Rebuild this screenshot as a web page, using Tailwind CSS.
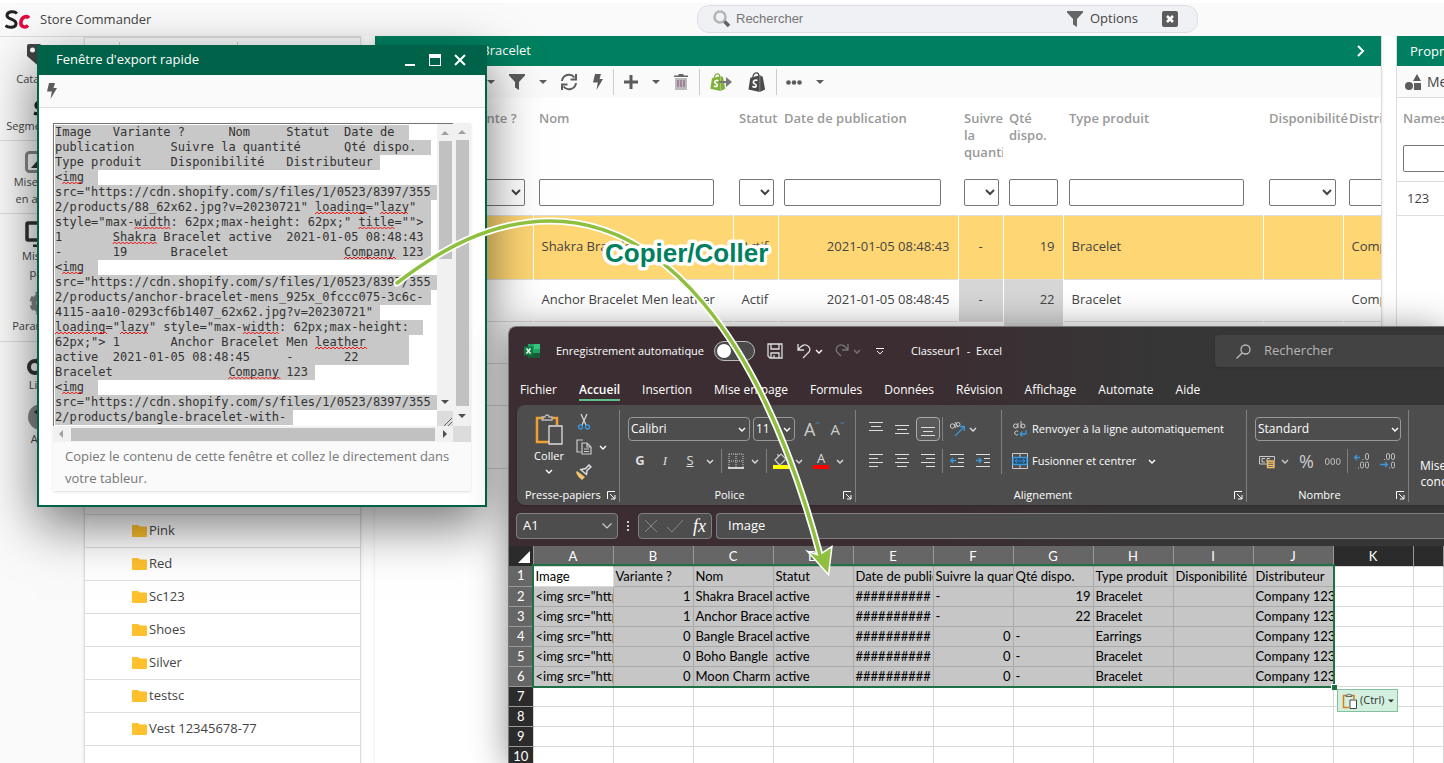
<!DOCTYPE html>
<html lang="fr">
<head>
    <meta charset="UTF-8">
    <meta name="viewport" content="width=device-width, initial-scale=1.0">
    <title>Store Commander</title>
    <script src="https://cdn.jsdelivr.net/npm/@tailwindcss/browser@4"></script>
</head>
<body class="bg-white font-['Open_Sans',sans-serif] text-[13px] text-[#444]">

    <!-- Shared icons -->
    <svg class="hidden">
        <symbol id="caret" viewBox="0 0 8 4"><path d="M0 0h8L4 4z" fill="currentColor"/></symbol>
        <symbol id="chevron" viewBox="0 0 8 5"><path d="M1 1l3 3 3-3" fill="none" stroke="currentColor" stroke-width="1.4"/></symbol>
        <symbol id="funnel" viewBox="0 0 16 16"><path d="M0 0h16v1.5L10 8v8l-4-2.5V8L0 1.500z" fill="currentColor"/></symbol>
        <symbol id="bolt" viewBox="0 0 10 16"><path d="M2 0h6L6.500 5H10L3.500 16 4.800 8.500H0z" fill="currentColor"/></symbol>
        <symbol id="bag" viewBox="0 0 18 21"><path d="M2 6l10-2.500 3 1.500 2.500 13.500L12 21 0 18.500z" fill="currentColor"/><path d="M4.500 6C5 2.500 7 1 8.500 1s2.500 1.500 2.500 3.500" fill="none" stroke="currentColor" stroke-width="1.300"/><path d="M12 4v17" stroke="#fff" stroke-opacity=".35"/><path d="M9.500 9C7 8 5 9 5.200 10.800c.2 1.700 3 1.700 3 3.600 0 1.700-2.200 2-4 .6" fill="none" stroke="#fff" stroke-width="1.800"/></symbol>
        <symbol id="folder" viewBox="0 0 15 12"><path d="M1 0h5l2 1.500h6a1 1 0 011 1V11a1 1 0 01-1 1H1a1 1 0 01-1-1V1a1 1 0 011-1z" fill="#fec12d"/></symbol>
        <symbol id="launcher" viewBox="0 0 9 9"><path d="M.5 8V.5H8M3 3l5 5M8 4v4H4" fill="none" stroke="currentColor"/></symbol>
    </svg>

    <div class="relative flex h-screen flex-col overflow-hidden">

        <!-- Top bar -->
        <header class="flex h-9 shrink-0 items-center border-t-3 border-white bg-[#fafafa]">
            <svg class="ml-[5px] h-5 w-[26px]" viewBox="0 0 26 20" fill="none">
                <path d="M12 3.500C9.500 1 2.500 1 2 5.200c-.4 4.600 9 3.300 9 8.300 0 5-8 4.500-10.500 2" stroke="#222" stroke-width="3"/>
                <path d="M24 8c-2-2.500-7-1.500-8 3.500-1 6 4.500 6.500 7 4" stroke="#e4073c" stroke-width="3.500"/>
            </svg>
            <span class="ml-[9px]">Store Commander</span>
            <label class="absolute left-[697px] top-[5px] flex h-7 w-[501px] items-center rounded-xl border border-[#dcdee1] bg-[#f0f1f4] pl-[15px]">
                <svg class="size-[18px]" viewBox="0 0 18 18" fill="none"><circle cx="7" cy="7" r="5.500" stroke="#b4b4b4" stroke-width="2.500"/><path d="M11.500 11.500L16 16" stroke="#59636e" stroke-width="3.500"/></svg>
                <input type="text" placeholder="Rechercher" class="ml-[5px] w-[331px] bg-transparent font-['Liberation_Sans',sans-serif] text-[13px] placeholder:text-[#757575]">
                <button class="flex items-center"><svg class="mr-[7px] size-4 text-[#666]"><use href="#funnel"/></svg>Options</button>
                <button aria-label="Fermer" class="ml-6"><svg class="size-4" viewBox="0 0 16 16"><rect width="16" height="16" rx="2" fill="#5c5c5c"/><path d="M5 5l6 6M11 5l-6 6" stroke="#fff" stroke-width="2.500"/></svg></button>
            </label>
        </header>

        <div class="flex min-h-0 grow">

            <!-- Sidebar -->
            <nav class="w-[84px] shrink-0 overflow-hidden whitespace-nowrap border-t border-[#ddd] bg-[#fafafa] text-center text-[11px] leading-[17px]">
                <a href="#" class="block h-[63px] pt-[7px]"><svg class="mx-auto h-[26px] w-[30px]" viewBox="0 0 30 26"><path d="M0 2a2 2 0 012-2h11l15 14-12 12L0 12z" fill="#444"/><circle cx="5.500" cy="6" r="2.500" fill="#fff"/></svg>Catalogue</a>
                <a href="#" class="block h-10"><svg class="mx-auto h-[17px] w-5" viewBox="0 0 20 17"><path d="M10 3C4 0 2 7 6 8s3 8-4 5" fill="none" stroke="#222" stroke-width="3"/></svg>Segmentation</a>
                <a href="#" class="block h-[73px] border-t border-[#ddd] pt-[10px]"><svg class="mx-auto h-[22px] w-[34px]" viewBox="0 0 34 22"><rect x="1.500" y="1.500" width="31" height="19" rx="3" fill="none" stroke="#888" stroke-width="3"/><path d="M6 17l7-8 7 8z" fill="#333"/></svg>Mise à jour<br>en attente</a>
                <a href="#" class="block h-[76px] border-t border-[#ddd] pt-[7px]"><svg class="mx-auto h-[26px] w-[34px]" viewBox="0 0 34 26"><rect x="2" y="2" width="30" height="17" rx="1" fill="none" stroke="#333" stroke-width="3.500"/><path d="M8 25h18" stroke="#333" stroke-width="3"/></svg>Mise en<br>page</a>
                <a href="#" class="block h-[52px] pt-[2px]"><svg class="mx-auto mb-[2px] h-6 w-7" viewBox="0 0 28 24"><circle cx="14" cy="12" r="8" fill="none" stroke="#888" stroke-width="5"/><circle cx="14" cy="12" r="11" fill="none" stroke="#888" stroke-width="3" stroke-dasharray="5 4"/></svg>Paramètres</a>
                <a href="#" class="block h-[59px] border-t border-[#ddd] pt-[12px]"><svg class="mx-auto h-[22px] w-[30px]" viewBox="0 0 30 22" fill="none" stroke="#333" stroke-width="4"><circle cx="8" cy="13" r="6"/><circle cx="16" cy="7" r="5"/></svg>Liens</a>
                <a href="#" class="block pt-[4px]"><svg class="mx-auto h-[26px] w-[30px]" viewBox="0 0 30 26"><circle cx="14" cy="13" r="13" fill="#888"/><path d="M8 9q6-6 12 0" stroke="#333" stroke-width="3" fill="none"/></svg>Aide</a>
            </nav>

            <!-- Category tree -->
            <section class="flex w-[277px] shrink-0 flex-col border-x border-t-2 border-[#ddd] bg-white shadow">
                <div class="flex h-12 shrink-0 items-start border-b border-[#ddd] bg-[#fafafa] pt-1">
                    <span class="ml-[34px] h-6 border-l border-[#ccc]"></span>
                    <span class="ml-[117px] h-6 border-l border-[#ccc]"></span>
                </div>
                <ul id="tree"></ul>
            </section>

            <!-- Product grid -->
            <section class="ml-[14px] flex min-w-0 grow flex-col border-r border-[#ddd] bg-white shadow">
                <div class="flex h-[30px] shrink-0 items-center bg-[#008060] pl-[13px] pr-4 text-white">
                    <svg class="h-3 w-3" viewBox="0 0 12 12"><rect x="1" y="1" width="10" height="10" rx="2" fill="none" stroke="#fff" stroke-width="1.500"/></svg>
                    <h2 class="ml-[3px] w-32 text-right">Bracelet</h2>
                    <svg class="ml-auto h-3 w-[9px]" viewBox="0 0 9 12"><path d="M2 1l5 5-5 5" fill="none" stroke="#fff" stroke-width="2"/></svg>
                </div>
                <div class="flex h-8 shrink-0 items-center bg-[#fafafa] pl-[112px] text-[#5c5c5c]">
                    <button aria-label="Plus"><svg class="h-1 w-2"><use href="#caret"/></svg></button>
                    <button aria-label="Filtrer" class="ml-[14px]"><svg class="size-4"><use href="#funnel"/></svg></button>
                    <button aria-label="Plus" class="ml-[14px]"><svg class="h-1 w-2"><use href="#caret"/></svg></button>
                    <button aria-label="Rafraîchir" class="ml-[13px]"><svg class="size-[18px]" viewBox="0 0 18 18" fill="none" stroke="currentColor" stroke-width="2"><path d="M2 8a7 7 0 0112.500-3.500M16 10A7 7 0 013.500 13.500M16 1v5.500h-5.500M2 17v-5.500h5.500"/></svg></button>
                    <button aria-label="Export rapide" class="ml-[14px]"><svg class="h-4 w-3"><use href="#bolt"/></svg></button>
                    <span class="ml-[9px] h-[26px] border-l border-[#ccc]"></span>
                    <button aria-label="Ajouter" class="ml-[10px]"><svg class="size-[14px]" viewBox="0 0 14 14" stroke="currentColor" stroke-width="3"><path d="M7 0v14M0 7h14"/></svg></button>
                    <button aria-label="Plus" class="ml-[14px]"><svg class="h-1 w-2"><use href="#caret"/></svg></button>
                    <button aria-label="Supprimer" class="ml-[14px]"><svg class="h-4 w-[14px]" viewBox="0 0 14 16"><path d="M0 1.500h4L5 0h4l1 1.500h4v1.500H0z" fill="#666"/><path d="M1 4h12v12H1z" fill="#bbb"/><path d="M4 6v7M7 6v7M10 6v7" stroke="#8a4a78"/></svg></button>
                    <span class="ml-[11px] h-[26px] border-l border-[#ccc]"></span>
                    <button aria-label="Voir sur la boutique" class="ml-[10px] flex items-center"><svg class="h-[18px] w-4 text-[#7fb13c]"><use href="#bag"/></svg><svg class="-ml-[7px] h-[10px] w-[13px]" viewBox="0 0 13 10"><path d="M0 4h7V0l6 5-6 5V6H0z" fill="#777"/></svg></button>
                    <button aria-label="Voir dans Shopify" class="ml-4"><svg class="h-5 w-[18px] text-[#4a4a4a]"><use href="#bag"/></svg></button>
                    <span class="ml-[10px] h-[26px] border-l border-[#ccc]"></span>
                    <button aria-label="Autres" class="ml-[9px]"><svg class="h-[5px] w-4" viewBox="0 0 16 5" fill="currentColor"><circle cx="2.500" cy="2.500" r="2.300"/><circle cx="8" cy="2.500" r="2.300"/><circle cx="13.500" cy="2.500" r="2.300"/></svg></button>
                    <button aria-label="Plus" class="ml-[14px]"><svg class="h-1 w-2"><use href="#caret"/></svg></button>
                </div>
                <div class="overflow-hidden">
                    <table class="w-[1168px] table-fixed border-collapse">
                        <colgroup><col class="w-[73px]"><col class="w-[85px]"><col class="w-[200px]"><col class="w-[45px]"><col class="w-[180px]"><col class="w-[45px]"><col class="w-[60px]"><col class="w-[200px]"><col class="w-[80px]"><col class="w-[200px]"></colgroup>
                        <thead id="gridHead"></thead>
                        <tbody id="gridBody"></tbody>
                    </table>
                </div>
            </section>

            <!-- Properties -->
            <section class="ml-[14px] w-12 shrink-0 overflow-hidden whitespace-nowrap border-l border-[#ddd] bg-white">
                <h2 class="h-[30px] bg-[#008060] pl-[13px] leading-[30px] text-white">Propriétés</h2>
                <div class="flex h-8 items-center border-b border-[#ddd] bg-[#fafafa] pl-2 text-sm">
                    <svg class="mr-[6px] h-4 w-4 shrink-0" viewBox="0 0 16 16" fill="#5c5c5c"><circle cx="4" cy="12" r="4"/><path d="M12 0l4 7H8zM9 9h7v7H9z"/></svg>Metafields
                </div>
                <label for="ns" class="block h-[47px] pl-[6px] pt-[11px] font-semibold text-[#999]">Namespace</label>
                <input id="ns" type="text" class="ml-[6px] h-[27px] w-32 rounded-[2px] border border-[#767676]">
                <div class="mt-[9px] border-y border-[#ddd] pl-[10px] leading-[33px]">123</div>
            </section>
        </div>

        <!-- Quick export window -->
        <section class="absolute left-[37px] top-[45px] w-[450px] border-2 border-t-0 border-[#006349] bg-white shadow-[0_18px_50px_rgba(0,0,0,0.55)]">
            <div class="flex h-[30px] items-center bg-[#006349] pl-[17px] pr-[19px] text-white">
                <h2>Fenêtre d'export rapide</h2>
                <button aria-label="Réduire" class="ml-auto mt-[10px] h-[2px] w-[10px] bg-white"></button>
                <button aria-label="Agrandir" class="ml-[14px] h-3 w-3 border border-t-4 border-white"></button>
                <button aria-label="Fermer" class="ml-[13px]"><svg class="size-3" viewBox="0 0 12 12" stroke="#fff" stroke-width="2"><path d="M1 1l10 10M11 1L1 11"/></svg></button>
            </div>
            <div class="flex h-[33px] items-center border-b border-[#ddd] bg-[#fafafa] pl-2 text-[#5c5c5c]">
                <button aria-label="Exporter"><svg class="h-4 w-[10px]"><use href="#bolt"/></svg></button>
            </div>
            <div class="mx-[14px] mb-[14px] mt-[15px] bg-[#fafafa] shadow">
                <div class="flex h-[319px]">
                    <div class="flex min-w-0 grow flex-col">
                        <div class="flex h-[303px] border-l border-t border-[#767676]">
                            <div class="relative min-w-0 grow bg-white">
                                <textarea id="export" aria-label="Données exportées" spellcheck="false" class="block h-full w-full resize-none overflow-hidden whitespace-pre bg-white pl-px pt-px font-['DejaVu_Sans_Mono',monospace] text-xs leading-[15px] text-[#333] outline-none [tab-size:8] selection:bg-[#c8c8c8] selection:text-[#333]"></textarea>
                                <svg id="squiggles" class="pointer-events-none absolute inset-0 h-full w-full" fill="none" stroke="#e11"></svg>
                            </div>
                            <div class="flex w-4 shrink-0 flex-col items-center bg-[#f1f1f1] pt-[7px]">
                                <svg class="h-1 w-2 rotate-180 text-[#a0a0a0]"><use href="#caret"/></svg>
                                <div class="mt-[6px] h-[118px] w-[13px] bg-[#c1c1c1]"></div>
                                <svg class="mt-auto h-1 w-2 text-[#505050]"><use href="#caret"/></svg>
                                <svg class="mt-[7px] h-[15px] w-full bg-[#dcdcdc]" viewBox="0 0 16 15"><path d="M7 15l8-8M11 15l4-4" stroke="#666"/></svg>
                            </div>
                        </div>
                        <div class="flex h-4 items-center bg-[#f1f1f1] px-[6px]">
                            <svg class="h-2 w-1" viewBox="0 0 4 8"><path d="M4 0v8L0 4z" fill="#a0a0a0"/></svg>
                            <div class="ml-2 h-[13px] grow bg-[#c1c1c1]"></div>
                            <svg class="ml-2 h-2 w-1" viewBox="0 0 4 8"><path d="M0 0v8l4-4z" fill="#505050"/></svg>
                        </div>
                    </div>
                    <div class="flex w-[18px] shrink-0 flex-col items-center bg-[#f1f1f1] pt-[7px]">
                        <svg class="h-1 w-2 rotate-180 text-[#a0a0a0]"><use href="#caret"/></svg>
                        <div class="mt-[6px] w-[13px] grow bg-[#c1c1c1]"></div>
                        <svg class="my-2 h-1 w-2 shrink-0 text-[#505050]"><use href="#caret"/></svg>
                        <div class="h-4 w-full shrink-0 bg-[#dcdcdc]"></div>
                    </div>
                </div>
                <p class="px-3 pb-[2px] pt-[3px] leading-[22px] text-[#777]">Copiez le contenu de cette fenêtre et collez le directement dans votre tableur.</p>
            </div>
        </section>

        <!-- Excel window -->
        <section class="absolute bottom-0 left-[508px] right-0 top-[326px] flex flex-col overflow-hidden rounded-tl-lg border-l border-t border-[#777] bg-linear-to-r from-[#3b2d31] from-45% to-[#363636] to-70% text-[11px] text-white shadow-[0_4px_36px_rgba(0,0,0,0.45)]">
            <div class="flex h-12 shrink-0 items-center pl-[15px]">
                <svg class="size-4" viewBox="0 0 16 16"><path d="M4 1h12v14H4z" fill="#21a366"/><path d="M10 1h6v5h-6z" fill="#33c481"/><path d="M4 10h12v5H4z" fill="#185c37"/><path d="M0 3.500h9v9H0z" fill="#107c41"/><path d="M2.500 5.500l4 5M6.500 5.500l-4 5" stroke="#fff" stroke-width="1.300"/></svg>
                <label for="autosave" class="ml-4">Enregistrement automatique</label>
                <input id="autosave" type="checkbox" class="ml-[10px] h-5 w-[41px] appearance-none rounded-full border border-[#bbb] bg-[#4a4a4a] before:m-[2px] before:block before:size-[14px] before:rounded-full before:bg-white">
                <button aria-label="Enregistrer" class="ml-3"><svg class="size-4" viewBox="0 0 16 16" fill="none" stroke="#ddd" stroke-width="1.300"><path d="M1 1h14v14H3l-2-2zM4 1v5h8V1M4 15v-5h8v5M7 15v-3"/></svg></button>
                <button aria-label="Annuler" class="ml-[14px] flex items-center"><svg class="h-4 w-[14px]" viewBox="0 0 14 16" fill="none" stroke="#ddd" stroke-width="1.300"><path d="M1 1v6h6M1 7C5 1 9 1 11.500 3.500s1.500 5-1 7L6 15"/></svg><svg class="ml-1 h-[5px] w-2"><use href="#chevron"/></svg></button>
                <button aria-label="Rétablir" class="ml-3 flex items-center text-[#777]"><svg class="h-4 w-[14px]" viewBox="0 0 14 16" fill="none" stroke="#777" stroke-width="1.300"><path d="M13 1v6H7M13 7C9 1 5 1 2.500 3.500s-1.500 5 1 7L6 13"/></svg><svg class="ml-1 h-[5px] w-2"><use href="#chevron"/></svg></button>
                <button aria-label="Personnaliser" class="ml-[15px]"><svg class="h-[7px] w-2" viewBox="0 0 8 7" fill="none" stroke="#fff"><path d="M0 .5h8M1 3l3 3 3-3"/></svg></button>
                <span class="ml-[27px] whitespace-pre">Classeur1  -  Excel</span>
                <label class="absolute left-[706px] right-0 top-2 flex h-8 items-center rounded-l bg-[#434343] pl-[21px] shadow">
                    <svg class="size-[15px]" viewBox="0 0 15 15" fill="none" stroke="#bbb" stroke-width="1.300"><circle cx="9.500" cy="5.500" r="4.500"/><path d="M6.300 8.700L.5 14.500"/></svg>
                    <input type="text" placeholder="Rechercher" class="ml-[13px] w-32 bg-transparent text-[13px] placeholder:text-[#b5b5b5]">
                </label>
            </div>

            <nav class="flex h-[30px] shrink-0 gap-[22px] pl-[11px] text-xs leading-[30px]">
                <a href="#">Fichier</a>
                <a href="#" class="h-[26px] border-b-2 border-[#5fc08a] font-semibold">Accueil</a>
                <a href="#">Insertion</a>
                <a href="#">Mise en page</a>
                <a href="#">Formules</a>
                <a href="#">Données</a>
                <a href="#">Révision</a>
                <a href="#">Affichage</a>
                <a href="#">Automate</a>
                <a href="#">Aide</a>
            </nav>

            <!-- Ribbon -->
            <div class="ml-2 flex h-[100px] shrink-0 overflow-hidden rounded-l-lg bg-[#4d4d4d] pb-[3px] pt-[5px] shadow">
                <div class="flex w-[103px] shrink-0 flex-col border-r border-[#808080]">
                    <div class="flex grow">
                        <button class="ml-3 flex w-10 flex-col items-center pt-1">
                            <svg class="h-8 w-[28px]" viewBox="0 0 28 32" fill="none"><path d="M9 4H2v24h12" stroke="#f0a030" stroke-width="2.500"/><path d="M17 4h5v7" stroke="#f0a030" stroke-width="2.500"/><path d="M7 6V3h3a2 2 0 014 0h3v3z" stroke="#bbb" stroke-width="1.300"/><path d="M14 12h13v18H14z" fill="#4d4d4d" stroke="#ddd" stroke-width="1.300"/></svg>
                            <span class="mt-[2px]">Coller</span>
                            <svg class="mt-1 h-[5px] w-2 shrink-0"><use href="#chevron"/></svg>
                        </button>
                        <div class="ml-[7px] flex flex-col gap-[9px] pt-1">
                            <button aria-label="Couper" class="w-4"><svg class="size-4" viewBox="0 0 16 16" fill="none"><path d="M5 0l5 11M11 0L6 11" stroke="#ddd" stroke-width="1.200"/><circle cx="4.500" cy="13" r="2" stroke="#3a96dd" stroke-width="1.300"/><circle cx="11.500" cy="13" r="2" stroke="#3a96dd" stroke-width="1.300"/></svg></button>
                            <button aria-label="Copier" class="flex items-center"><svg class="size-4" viewBox="0 0 16 16" fill="none" stroke="#ccc" stroke-width="1.200"><path d="M5 13H1V1h6M6 4h5l4 4v7H6zM11 4v4h4M8 10h5M8 12.500h5"/></svg><svg class="ml-[7px] h-[5px] w-2"><use href="#chevron"/></svg></button>
                            <button aria-label="Reproduire la mise en forme" class="w-4"><svg class="size-4" viewBox="0 0 16 16"><path d="M1 7l8 6-3 3C3 14 1 11 0 8z" fill="#f5c46b"/><path d="M4 5l7 6M5.500 5.500l4-1L13 1l2 2-4 3.500-.5 4" stroke="#ddd" stroke-width="1.500" fill="none"/></svg></button>
                        </div>
                    </div>
                    <div class="flex h-[14px] items-center pl-2 pr-[3px] leading-[14px]">Presse-papiers<svg class="ml-auto size-[9px]"><use href="#launcher"/></svg></div>
                </div>

                <div class="flex w-[236px] shrink-0 flex-col border-r border-[#808080]">
                    <div class="flex h-[38px] items-center gap-[3px] pl-2">
                        <span class="relative"><select aria-label="Police" class="h-6 w-[122px] appearance-none rounded border border-[#999] px-[2px] text-xs"><option>Calibri</option></select><svg class="absolute right-1 top-[10px] h-[5px] w-2"><use href="#chevron"/></svg></span>
                        <span class="relative"><select aria-label="Taille" class="h-6 w-[42px] appearance-none rounded border border-[#999] px-[2px] text-xs"><option>11</option></select><svg class="absolute right-1 top-[10px] h-[5px] w-2"><use href="#chevron"/></svg></span>
                        <button aria-label="Agrandir la police" class="ml-[6px] flex text-lg leading-6 text-[#ccc]">A<svg class="mt-1 h-1 w-[5px] rotate-180 text-[#3a96dd]"><use href="#chevron"/></svg></button>
                        <button aria-label="Réduire la police" class="ml-[7px] flex text-[15px] leading-6 text-[#ccc]">A<svg class="mt-1 h-1 w-[5px] text-[#3a96dd]"><use href="#chevron"/></svg></button>
                    </div>
                    <div class="flex h-[26px] items-center pl-[14px] text-[13px] text-[#ddd]">
                        <button class="w-3 font-bold">G</button>
                        <button class="ml-[13px] w-3 font-['Liberation_Serif',serif] italic">I</button>
                        <button class="ml-[13px] w-3 underline">S</button>
                        <svg class="ml-[10px] h-[5px] w-2"><use href="#chevron"/></svg>
                        <span class="ml-[7px] h-6 border-l border-[#808080]"></span>
                        <button aria-label="Bordures" class="ml-[6px]"><svg class="size-4" viewBox="0 0 16 16"><path d="M1 1h14v14M1 1v14M8 1v14M1 8h14" fill="none" stroke="#ccc" stroke-dasharray="1 1"/><path d="M0 15h16" stroke="#fff" stroke-width="1.500"/></svg></button>
                        <svg class="ml-[7px] h-[5px] w-2"><use href="#chevron"/></svg>
                        <span class="ml-[7px] h-6 border-l border-[#808080]"></span>
                        <button aria-label="Remplissage" class="ml-[6px]"><svg class="size-4" viewBox="0 0 16 16"><path d="M2 7l6-6 5 5-5 5-2 .5zM5 4V1" fill="none" stroke="#ccc" stroke-width="1.200"/><path d="M0 12h16v4H0z" fill="#ff0"/></svg></button>
                        <svg class="ml-[6px] h-[5px] w-2"><use href="#chevron"/></svg>
                        <button aria-label="Couleur de police" class="ml-[10px] flex h-4 w-4 items-end justify-center border-b-4 border-[#f00] leading-[14px]">A</button>
                        <svg class="ml-[7px] h-[5px] w-2"><use href="#chevron"/></svg>
                    </div>
                    <div class="mt-auto flex h-[14px] items-center pr-[3px] leading-[14px]"><span class="grow pr-1 text-center">Police</span><svg class="size-[9px]"><use href="#launcher"/></svg></div>
                </div>

                <div class="flex w-[391px] shrink-0 flex-col border-r border-[#808080]">
                    <div class="flex">
                        <div class="flex w-[146px] flex-col border-r border-[#808080]">
                            <div class="flex h-[38px] items-center pl-[13px] text-[#ddd]">
                                <button aria-label="Aligner en haut"><svg class="size-[14px]" viewBox="0 0 14 14" stroke="#ddd"><path d="M0 .5h14M2 4.500h10M0 8.500h14"/></svg></button>
                                <button aria-label="Aligner au centre" class="ml-3"><svg class="size-[14px]" viewBox="0 0 14 14" stroke="#ddd"><path d="M0 3.500h14M2 7.500h10M0 11.500h14"/></svg></button>
                                <button aria-label="Aligner en bas" class="ml-[7px] flex size-6 items-center justify-center rounded border border-[#aaa] bg-[#595959]"><svg class="size-[14px]" viewBox="0 0 14 14" stroke="#ddd"><path d="M0 5.500h14M2 9.500h10M0 13.500h14"/></svg></button>
                                <span class="ml-[2px] h-6 border-l border-[#808080]"></span>
                                <button aria-label="Orientation" class="ml-[6px]"><svg class="size-4" viewBox="0 0 16 16" fill="none"><circle cx="3.500" cy="5" r="2.200" stroke="#ccc"/><path d="M5 3l2 4M6 1l3 5" stroke="#ccc"/><circle cx="9" cy="3.500" r="2" stroke="#ccc"/><path d="M6 15l9-9M11 5.500h4.500V10" stroke="#3a96dd" stroke-width="1.300"/></svg></button>
                                <svg class="ml-1 h-[5px] w-2"><use href="#chevron"/></svg>
                            </div>
                            <div class="flex h-[26px] items-center pl-[13px]">
                                <button aria-label="Aligner à gauche"><svg class="size-[14px]" viewBox="0 0 14 14" stroke="#ddd"><path d="M0 .5h14M0 4.500h9M0 8.500h14M0 12.500h9"/></svg></button>
                                <button aria-label="Centrer" class="ml-3"><svg class="size-[14px]" viewBox="0 0 14 14" stroke="#ddd"><path d="M0 .5h14M2 4.500h10M0 8.500h14M2 12.500h10"/></svg></button>
                                <button aria-label="Aligner à droite" class="ml-3"><svg class="size-[14px]" viewBox="0 0 14 14" stroke="#ddd"><path d="M0 .5h14M5 4.500h9M0 8.500h14M5 12.500h9"/></svg></button>
                                <span class="ml-[7px] h-6 border-l border-[#808080]"></span>
                                <button aria-label="Diminuer le retrait" class="ml-[7px]"><svg class="size-[14px]" viewBox="0 0 14 14" stroke="#ddd" fill="none"><path d="M0 .5h14M8 4.500h6M8 8.500h6M0 12.500h14"/><path d="M6 6.500H1M3 4L.7 6.500 3 9" stroke="#3a96dd" stroke-width="1.300"/></svg></button>
                                <button aria-label="Augmenter le retrait" class="ml-3"><svg class="size-[14px]" viewBox="0 0 14 14" stroke="#ddd" fill="none"><path d="M0 .5h14M8 4.500h6M8 8.500h6M0 12.500h14"/><path d="M0 6.500h5M3 4l2.300 2.500L3 9" stroke="#3a96dd" stroke-width="1.300"/></svg></button>
                            </div>
                        </div>
                        <div class="flex flex-col pl-[10px]">
                            <button class="flex h-[38px] items-center"><svg class="mr-1 size-4" viewBox="0 0 16 16" fill="none" stroke="#ccc"><circle cx="3.500" cy="5" r="2"/><path d="M6 2v5M9 0v7M6 13.500a2 2 0 110-3"/><circle cx="11" cy="5" r="2"/><path d="M14 9v4H8M10.500 10.500L8 13l2.500 2.500" stroke="#3a96dd" stroke-width="1.300"/></svg>Renvoyer à la ligne automatiquement</button>
                            <button class="flex h-[26px] items-center"><svg class="mr-1 size-4" viewBox="0 0 16 16" fill="none"><path d="M.5.500h15v15H.5zM8 0v4M8 12v4" stroke="#ccc"/><path d="M1 4.500h14v7H1z" fill="#224b6d" stroke="#3a96dd" stroke-width="1.300"/><path d="M3 8h10M5 6L3 8l2 2M11 6l2 2-2 2" stroke="#3a96dd"/></svg>Fusionner et centrer<svg class="ml-3 h-[5px] w-2"><use href="#chevron"/></svg></button>
                        </div>
                    </div>
                    <div class="mt-auto flex h-[14px] items-center pr-[3px] leading-[14px]"><span class="grow pr-1 text-center">Alignement</span><svg class="size-[9px]"><use href="#launcher"/></svg></div>
                </div>

                <div class="flex w-[162px] shrink-0 flex-col border-r border-[#808080]">
                    <div class="flex h-[38px] items-center pl-2">
                        <span class="relative"><select aria-label="Format de nombre" class="h-6 w-[146px] appearance-none rounded border border-[#999] px-[2px] text-xs"><option>Standard</option></select><svg class="absolute right-[2px] top-[10px] h-[5px] w-2"><use href="#chevron"/></svg></span>
                    </div>
                    <div class="flex h-[26px] items-center pl-3 text-[#ccc]">
                        <button aria-label="Format comptable"><svg class="size-4" viewBox="0 0 16 16" fill="none" stroke="#ccc"><path d="M8 11H.5V3.500h15V7M6 5.500H3v3.500h3M8 9V5.500h3"/><path d="M8.500 8h6.500v6.500H8.500zM8.500 10.200H15M8.500 12.400H15" stroke="#f5c46b" stroke-width="1.300"/></svg></button>
                        <svg class="ml-[6px] h-[5px] w-2"><use href="#chevron"/></svg>
                        <button class="ml-[10px] text-lg leading-none">%</button>
                        <button aria-label="Séparateur de milliers" class="ml-[11px]"><svg class="h-[7px] w-4" viewBox="0 0 16 7" fill="none" stroke="#bbb"><rect x=".5" y=".5" width="3.500" height="6" rx="1.700"/><rect x="6" y=".5" width="3.500" height="6" rx="1.700"/><rect x="11.500" y=".5" width="3.500" height="6" rx="1.700"/></svg></button>
                        <span class="ml-[6px] h-6 border-l border-[#808080]"></span>
                        <button aria-label="Ajouter une décimale" class="ml-[6px]"><svg class="size-4" viewBox="0 0 16 16" fill="none" stroke="#bbb"><path d="M6 4.500H.5M3 2L.5 4.500 3 7" stroke="#3a96dd" stroke-width="1.300"/><rect x="11.500" y=".5" width="3" height="6" rx="1.500"/><rect x="6.500" y="9" width="3" height="6" rx="1.500"/><rect x="11.500" y="9" width="3" height="6" rx="1.500"/><path d="M9 6v1M4.500 14.500v1"/></svg></button>
                        <button aria-label="Réduire les décimales" class="ml-[10px]"><svg class="size-4" viewBox="0 0 16 16" fill="none" stroke="#bbb"><path d="M0 11.500h7M5 9l2.500 2.500L5 14" stroke="#3a96dd" stroke-width="1.300"/><rect x="6.500" y=".5" width="3" height="6" rx="1.500"/><rect x="11.500" y=".5" width="3" height="6" rx="1.500"/><rect x="11.500" y="9" width="3" height="6" rx="1.500"/><path d="M4.500 6v1M9.500 14.500v1"/></svg></button>
                    </div>
                    <div class="mt-auto flex h-[14px] items-center pr-[3px] leading-[14px]"><span class="grow pr-1 text-center">Nombre</span><svg class="size-[9px]"><use href="#launcher"/></svg></div>
                </div>

                <button class="ml-[11px] shrink-0 pt-[36px] text-center text-xs leading-4">Mise en forme<br>conditionnelle</button>
            </div>

            <!-- Formula bar -->
            <div class="mb-[7px] ml-[7px] mt-[8px] flex h-[26px] shrink-0 items-stretch text-[13px]">
                <div class="flex w-[102px] shrink-0 items-center rounded border border-[#808080] bg-[#4d4d4d] pl-[6px] pr-[5px]">
                    <input type="text" aria-label="Zone Nom" value="A1" class="w-[70px] bg-transparent"><svg class="ml-auto h-[6px] w-[10px]" viewBox="0 0 10 6"><path d="M.5.500L5 5 9.500.5" fill="none" stroke="#ccc" stroke-width="1.200"/></svg>
                </div>
                <svg class="mx-[8px] h-[26px] w-1 shrink-0" viewBox="0 0 4 26" fill="#ccc"><path d="M1 8h2v2H1zM1 12h2v2H1zM1 16h2v2H1z"/></svg>
                <div class="flex w-[74px] shrink-0 items-center rounded border border-[#808080] bg-[#4d4d4d] pl-[6px]">
                    <svg class="h-3 w-3" viewBox="0 0 12 12" stroke="#888"><path d="M0 0l12 12M12 0L0 12"/></svg>
                    <svg class="ml-[10px] h-3 w-4" viewBox="0 0 16 12" fill="none" stroke="#888"><path d="M0 7l5 5L16 0"/></svg>
                    <span class="ml-[10px] font-['Liberation_Serif',serif] text-lg italic leading-none">fx</span>
                </div>
                <input type="text" aria-label="Barre de formule" value="Image" class="ml-1 grow rounded-l border border-r-0 border-[#808080] bg-[#4d4d4d] px-[11px]">
            </div>

            <!-- Sheet -->
            <div class="relative shrink-0 grow bg-white font-[Lato,sans-serif] text-[13px] text-black">
                <table class="w-full table-fixed border-collapse">
                    <thead id="sheetHead"></thead>
                    <tbody id="sheetBody"></tbody>
                </table>
                <div class="pointer-events-none absolute left-[23px] top-[18px] h-[124px] w-[803px] border-2 border-[#1e7145]"></div>
                <div class="absolute left-[822px] top-[138px] size-[6px] border-l border-t border-white bg-[#1e7145]"></div>
                <button class="absolute left-[828px] top-[143px] flex h-[23px] w-[61px] items-center border border-[#86bf9f] bg-[#d3f0df] pl-1 font-['Open_Sans',sans-serif] text-[11px] text-[#333]">
                    <svg class="mr-[2px] size-4 shrink-0" viewBox="0 0 16 16" fill="none"><path d="M4 2.500H1.500v12H7M10 2.500h2V6" stroke="#e07b1a" stroke-width="1.500"/><path d="M4 3.500V2h2a1 1 0 012 0h2v1.500z" stroke="#666"/><path d="M8 7h6.500v8.500H8z" fill="#fff" stroke="#444"/></svg>(Ctrl)<svg class="ml-[3px] h-1 w-[6px] shrink-0" viewBox="0 0 8 4"><path d="M0 0h8L4 4z" fill="#333"/></svg>
                </button>
            </div>
        </section>

        <!-- Annotation arrow -->
        <svg class="pointer-events-none absolute left-0 top-0 h-[763px] w-[1444px]" fill="none">
            <path d="M397 283C440 250 490 221 550 221C660 221 760 330 820 555" stroke="#fff" stroke-width="7" stroke-linecap="round"/>
            <path d="M828 573L810 553L819 556L831 548z" fill="#8fbf3f" stroke="#fff" stroke-width="3"/>
            <path d="M397 283C440 250 490 221 550 221C660 221 760 330 820 555" stroke="#8fbf3f" stroke-width="3.500" stroke-linecap="round"/>
            <path d="M828 573L810 553L819 556L831 548z" fill="#8fbf3f"/>
            <text x="605" y="262" class="font-['Liberation_Sans',sans-serif] text-[26px] font-bold" fill="#008060" stroke="#fff" stroke-width="7" stroke-linejoin="round" paint-order="stroke">Copier/Coller</text>
        </svg>
    </div>

    <script>
        // Category tree: the first rows have no label
        const categories = ['', '', '', '', '', '', '', '', '', '', '', '', 'Jewelry', 'Pink', 'Red', 'Sc123', 'Shoes', 'Silver', 'testsc', 'Vest 12345678-77'];
        document.getElementById('tree').innerHTML = categories.map(name => `
            <li class="flex h-[33px] items-center border-b border-[#ddd] pl-[47px]">
                ${name ? `<svg class="mr-[2px] h-3 w-[15px]"><use href="#folder"/></svg>${name}` : ''}
            </li>`).join('');

        // Product grid
        const columns = [
            ['Image', 'input', ''], ['Variante ?', 'select', 'w-[71px]'], ['Nom', 'input', 'w-[175px]'], ['Statut', 'select', 'w-[35px]'],
            ['Date de publication', 'input', 'w-[157px]'], ['Suivre la quantité', 'select', 'w-[35px]'], ['Qté dispo.', 'input', 'w-[49px]'],
            ['Type produit', 'input', 'w-[175px]'], ['Disponibilité', 'select', 'w-[67px]'], ['Distributeur', 'input', 'w-[175px]']
        ];
        document.getElementById('gridHead').innerHTML = `
            <tr class="h-[81px] text-left align-top leading-[17px] text-[#999]">
                ${columns.map((c, i) => `<th class="pl-[6px] pt-3 font-semibold ${i === 5 ? 'overflow-hidden' : ''}">${c[0]}</th>`).join('')}
            </tr>
            <tr class="h-[36px] align-top">
                ${columns.map(c => `<td class="pl-[6px]">${c[2] ? `<${c[1]} aria-label="${c[0]}" class="block h-[27px] rounded-[2px] border border-[#767676] ${c[2]}"></${c[1]}>` : ''}</td>`).join('')}
            </tr>`;

        const products = [
            ['', '', 'Shakra Bracelet', 'Actif', '2021-01-05 08:48:43', '-', '19', 'Bracelet', '', 'Company 123'],
            ['', '', 'Anchor Bracelet Men leather', 'Actif', '2021-01-05 08:48:45', '-', '22', 'Bracelet', '', 'Company 123'],
            ['', '', '', '', '', '', '', '', '', ''],
            ['', '', '', '', '', '', '', '', '', ''],
            ['', '', '', '', '', '', '', '', '', '']
        ];
        const rowStyles = ['h-[64px] bg-[#fed673]', 'h-[42px]', 'h-[42px]', 'h-[42px]', 'h-[63px]'];
        const alignments = { 4: 'text-right', 5: 'text-center', 6: 'text-right' };
        document.getElementById('gridBody').innerHTML = products.map((p, r) => `
            <tr class="border-y border-[#ddd] ${rowStyles[r]}">
                ${p.map((v, i) => `<td class="overflow-hidden whitespace-nowrap border-r border-r-white px-2 ${alignments[i] || ''} ${r > 0 && (i === 6 || (i === 5 && r === 1)) ? 'bg-[#d6d6d6]' : ''}">${v}</td>`).join('')}
            </tr>`).join('');

        // Exported text, fully selected
        const lines = [
            'Image\tVariante ?\tNom\tStatut\tDate de ',
            'publication\tSuivre la quantité\tQté dispo. ',
            'Type produit\tDisponibilité\tDistributeur',
            '<img ',
            'src="https://cdn.shopify.com/s/files/1/0523/8397/355',
            '2/products/88_62x62.jpg?v=20230721" loading="lazy" ',
            'style="max-width: 62px;max-height: 62px;" title="">',
            '1\tShakra Bracelet\tactive\t2021-01-05 08:48:43',
            '-\t19\tBracelet\t\tCompany 123',
            '<img ',
            'src="https://cdn.shopify.com/s/files/1/0523/8397/355',
            '2/products/anchor-bracelet-mens_925x_0fccc075-3c6c-',
            '4115-aa10-0293cf6b1407_62x62.jpg?v=20230721"',
            'loading="lazy" style="max-width: 62px;max-height: ',
            '62px;"> 1\tAnchor Bracelet Men leather\t',
            'active\t2021-01-05 08:48:45\t-\t22\t',
            'Bracelet\t\tCompany 123',
            '<img ',
            'src="https://cdn.shopify.com/s/files/1/0523/8397/355',
            '2/products/bangle-bracelet-with-'
        ];
        const exportBox = document.getElementById('export');
        exportBox.value = lines.join('\n') + '\n';
        exportBox.focus();
        exportBox.select();
        exportBox.scrollTop = 0;

        // Spell-check underlines
        const misspelt = [[3, 'img'], [5, 'loading'], [5, 'lazy'], [6, 'width'], [6, 'title'], [7, 'Shakra'], [8, 'Company'], [9, 'img'],
            [13, 'loading'], [13, 'lazy'], [13, 'width'], [14, 'leather'], [16, 'Company'], [17, 'img']];
        const charWidth = 7.224;
        document.getElementById('squiggles').innerHTML = misspelt.map(([row, word]) => {
            const before = lines[row].slice(0, lines[row].indexOf(word));
            let col = 0;
            for (const ch of before) {
                col = ch === '\t' ? (Math.floor(col / 8) + 1) * 8 : col + 1;
            }
            const steps = Math.round(word.length * charWidth / 4);
            return `<path d="M${1 + col * charWidth} ${row * 15 + 15}${'l2 -2l2 2'.repeat(steps)}"/>`;
        }).join('');

        // Spreadsheet
        const letters = ['A', 'B', 'C', 'D', 'E', 'F', 'G', 'H', 'I', 'J', 'K', ''];
        document.getElementById('sheetHead').innerHTML = `
            <tr class="h-5 text-white">
                <th class="relative w-[24px] bg-[#2b2b2b] p-0"><svg class="absolute bottom-[3px] right-[3px] size-3" viewBox="0 0 12 12"><path d="M12 0v12H0z" fill="#fff"/></svg></th>
                ${letters.map((l, i) => `<th class="${l ? 'w-20' : ''} border-x border-[#999] p-0 font-normal leading-[18px] ${i < 10 ? 'bg-[#666]' : 'bg-[#2b2b2b]'}">${l}</th>`).join('')}
            </tr>`;
        const img = '&lt;img src="https://cdn.shopify.com"';
        const sheet = [
            ['Image', 'Variante ?', 'Nom', 'Statut', 'Date de publication', 'Suivre la quantité', 'Qté dispo.', 'Type produit', 'Disponibilité', 'Distributeur'],
            [img, '1', 'Shakra Bracelet', 'active', '##########', '-', '19', 'Bracelet', '', 'Company 123'],
            [img, '1', 'Anchor Bracelet', 'active', '##########', '-', '22', 'Bracelet', '', 'Company 123'],
            [img, '0', 'Bangle Bracelet', 'active', '##########', '0', '-', 'Earrings', '', 'Company 123'],
            [img, '0', 'Boho Bangle', 'active', '##########', '0', '-', 'Bracelet', '', 'Company 123'],
            [img, '0', 'Moon Charm', 'active', '##########', '0', '-', 'Bracelet', '', 'Company 123'],
            [], [], [], []
        ];
        document.getElementById('sheetBody').innerHTML = sheet.map((row, r) => `
            <tr class="h-5">
                <th class="border-b border-[#999] p-0 font-normal leading-[19px] text-white ${r < 6 ? 'bg-[#666]' : 'bg-[#2b2b2b]'}">${r + 1}</th>
                ${letters.map((l, c) => {
                    const value = row[c] || '';
                    const selected = r < 6 && c < 10;
                    const fill = selected && (r || c) ? 'border-[#aaa] bg-[#c6c6c6]' : 'border-[#d9d9d9]';
                    const right = /^(\d+|#+)$/.test(value) ? 'text-right' : '';
                    const clip = c === 9 ? '' : 'overflow-hidden';
                    return `<td class="whitespace-nowrap border p-0 px-[2px] leading-[19px] ${fill} ${right} ${clip}">${value}</td>`;
                }).join('')}
            </tr>`).join('');
    </script>
</body>
</html>
